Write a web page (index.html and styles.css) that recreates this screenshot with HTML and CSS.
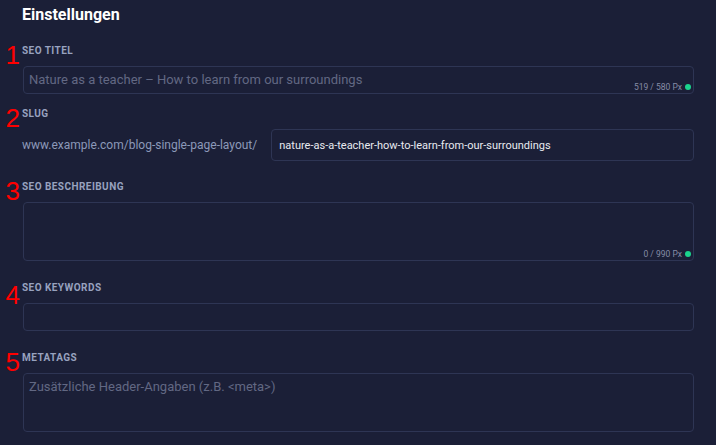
FILE: index.html
```html
<!DOCTYPE html>
<html lang="de">
<head>
<meta charset="utf-8">
<link rel="stylesheet" href="styles.css">
</head>
<body>
<div class="page">
  <h1 class="title">Einstellungen</h1>

  <div class="field field-first">
    <span class="marker">1</span>
    <div class="label">SEO Titel</div>
    <div class="control control-input">
      <span class="placeholder">Nature as a teacher – How to learn from our surroundings</span>
      <span class="counter">519 / 580 Px <i class="dot"></i></span>
    </div>
  </div>

  <div class="field field-slug">
    <span class="marker">2</span>
    <div class="label">Slug</div>
    <div class="slug-row">
      <span class="slug-prefix">www.example.com/blog-single-page-layout/</span>
      <div class="control control-slug">
        <span class="value">nature-as-a-teacher-how-to-learn-from-our-surroundings</span>
      </div>
    </div>
  </div>

  <div class="field">
    <span class="marker">3</span>
    <div class="label">SEO Beschreibung</div>
    <div class="control control-area">
      <span class="counter">0 / 990 Px <i class="dot"></i></span>
    </div>
  </div>

  <div class="field field-wide">
    <span class="marker marker-low">4</span>
    <div class="label">SEO Keywords</div>
    <div class="control control-input"></div>
  </div>

  <div class="field field-wide">
    <span class="marker">5</span>
    <div class="label">Metatags</div>
    <div class="control control-area">
      <span class="placeholder placeholder-area">Zusätzliche Header-Angaben (z.B. &lt;meta&gt;)</span>
    </div>
  </div>
</div>
</body>
</html>
```

FILE: styles.css
```css
html, body {
  margin: 0;
  padding: 0;
  background: #1b1f37;
}

body {
  font-family: Roboto, "Liberation Sans", sans-serif;
  width: 716px;
  height: 445px;
  overflow: hidden;
}

.page {
  padding: 5px 22px 0 22px;
}

.title {
  margin: 0;
  font-size: 16px;
  line-height: 20px;
  font-weight: 700;
  color: #ffffff;
}

.field {
  position: relative;
  margin-top: 20px;
}

.field-first {
  margin-top: 20px;
}

.field-slug {
  margin-top: 14px;
}

.field-wide {
  margin-top: 21px;
}

.marker {
  position: absolute;
  left: -18px;
  top: -1px;
  width: 16px;
  text-align: right;
  font-family: "Liberation Sans", Arial, sans-serif;
  font-size: 26px;
  line-height: 22px;
  color: #ff0000;
}

.marker-low {
  top: 2px;
}

.label {
  font-size: 10px;
  line-height: 12px;
  font-weight: 700;
  letter-spacing: 0.45px;
  text-transform: uppercase;
  color: #98a2bf;
  margin-bottom: 9px;
}

.control {
  position: relative;
  margin-left: 1px;
  box-sizing: border-box;
  border: 1px solid #2e3554;
  border-radius: 4px;
  background: #1b1f37;
}

.control-input {
  height: 28px;
  display: flex;
  align-items: center;
  padding: 0 5px;
}

.control-area {
  height: 59px;
  padding: 5px 5px;
}

.placeholder {
  font-size: 13px;
  line-height: 16px;
  color: #626883;
}

.placeholder-area {
  display: block;
}

.counter {
  position: absolute;
  right: 2px;
  bottom: 1px;
  display: flex;
  align-items: center;
  gap: 3px;
  font-size: 8.5px;
  line-height: 10px;
  color: #868ca6;
}

.dot {
  display: inline-block;
  width: 6px;
  height: 6px;
  border-radius: 50%;
  background: #1bd38c;
}

.slug-row {
  display: flex;
  align-items: center;
  gap: 13px;
}

.slug-prefix {
  font-size: 12px;
  color: #8c99b9;
  white-space: nowrap;
}

.control-slug {
  flex: 1;
  height: 32px;
  display: flex;
  align-items: center;
  padding: 0 7px;
}

.value {
  font-size: 11px;
  color: #e8eaf0;
  white-space: nowrap;
}
```
